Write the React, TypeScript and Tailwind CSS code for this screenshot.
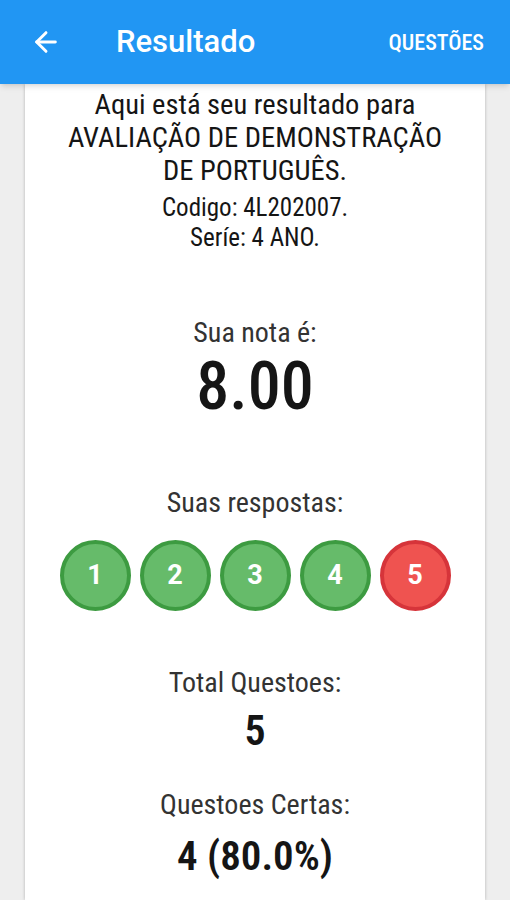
import { ArrowLeft } from 'lucide-react';

const answers = [
  { n: 1, ok: true },
  { n: 2, ok: true },
  { n: 3, ok: true },
  { n: 4, ok: true },
  { n: 5, ok: false },
];

export default function App() {
  return (
    <div
      className="w-[510px] h-[900px] overflow-hidden bg-[#eeeeee] flex flex-col"
      style={{ fontFamily: '"Roboto Condensed", Roboto, "Liberation Sans", sans-serif' }}
    >
      {/* App bar */}
      <div className="h-[84px] shrink-0 bg-[#2196f3] flex items-center px-[30px] shadow-md z-10">
        <ArrowLeft className="w-[32px] h-[32px] text-white" strokeWidth={2.2} />
        <h1 className="ml-[54px] text-[31px] font-medium text-white font-['Roboto',sans-serif]">Resultado</h1>
        <span className="ml-auto -mr-[4px] text-[22px] font-medium text-white">QUESTÕES</span>
      </div>

      {/* Card */}
      <div className="mx-[25px] flex-1 bg-white shadow-[0_0_3px_rgba(0,0,0,0.25)] flex flex-col items-center text-center text-[#151515]">
        <p className="mt-[4px] text-[28.5px] leading-[33px]">
          Aqui está seu resultado para
          <br />
          AVALIAÇÃO DE DEMONSTRAÇÃO
          <br />
          DE PORTUGUÊS.
        </p>
        <p className="mt-[6px] text-[25px] leading-[30px]">
          Codigo: 4L202007.
          <br />
          Seríe: 4 ANO.
        </p>

        <p className="mt-[63px] text-[28px] leading-[34px] text-[#333]">Sua nota é:</p>
        <p className="mt-[2px] text-[66px] font-medium leading-[70px]">8.00</p>

        <p className="mt-[64px] text-[28px] leading-[34px] text-[#333]">Suas respostas:</p>
        <div className="mt-[20px] flex gap-[9px]">
          {answers.map((a) => (
            <div
              key={a.n}
              className={`w-[71px] h-[71px] rounded-full border-[4px] flex items-center justify-center text-white text-[27px] font-bold font-['Roboto',sans-serif] ${
                a.ok ? 'bg-[#66bb6a] border-[#3d9b41]' : 'bg-[#ef5350] border-[#d6343a]'
              }`}
            >
              {a.n}
            </div>
          ))}
        </div>

        <p className="mt-[55px] text-[28px] leading-[34px] text-[#333]">Total Questoes:</p>
        <p className="mt-[8px] text-[42px] font-semibold leading-[46px]">5</p>

        <p className="mt-[34px] text-[28px] leading-[34px] text-[#333]">Questoes Certas:</p>
        <p className="mt-[10px] text-[41px] font-semibold leading-[48px]">4 (80.0%)</p>
      </div>
    </div>
  );
}
